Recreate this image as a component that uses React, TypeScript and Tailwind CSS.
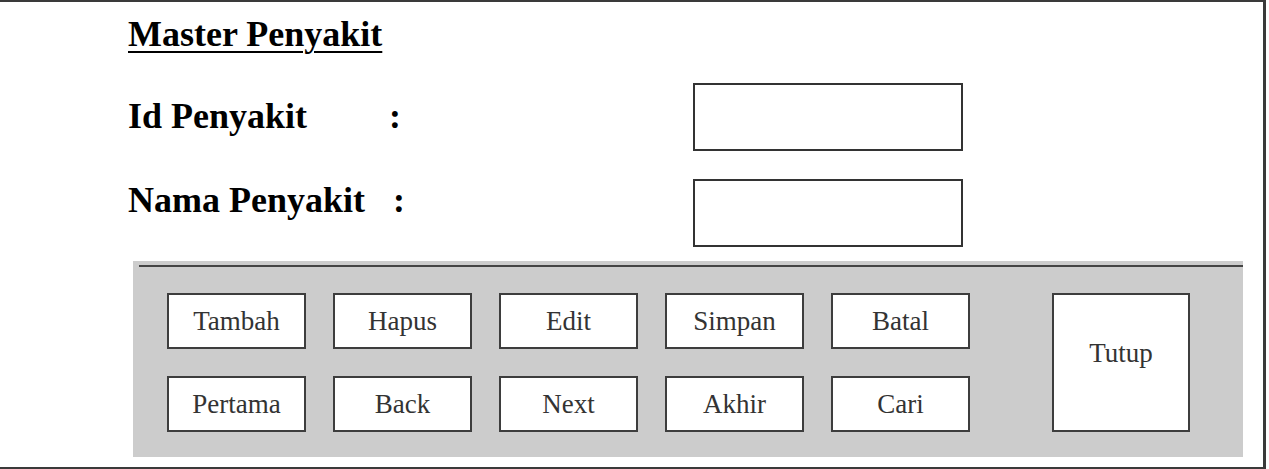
const fields = [
  { label: 'Id Penyakit', labelW: 'w-[261px]', rowTop: 'mt-[29px]', textTop: 'mt-[13px]' },
  { label: 'Nama Penyakit', labelW: 'w-[265px]', rowTop: 'mt-[28px]', textTop: 'mt-[1px]' },
]

const buttons = ['Tambah', 'Hapus', 'Edit', 'Simpan', 'Batal', 'Pertama', 'Back', 'Next', 'Akhir', 'Cari']

function FormButton({ label }: { label: string }) {
  return (
    <div className="h-[56px] border-2 border-[#3d3d3d] bg-white flex items-center justify-center text-[27px] leading-none text-[#333]">
      {label}
    </div>
  )
}

export default function App() {
  return (
    <div className="w-[1266px] h-[469px] border-t-2 border-r-[3px] border-b-2 border-[#3a3a3a] bg-white font-['Liberation_Serif','Times_New_Roman',serif]">
      {/* Title */}
      <div className="pl-[128px] pt-[12px]">
        <h1 className="text-[36px] leading-[40px] font-bold text-black underline decoration-2 underline-offset-[5px]">
          Master Penyakit
        </h1>
      </div>

      {/* Fields */}
      {fields.map((f) => (
        <div key={f.label} className={`flex items-start pl-[128px] ${f.rowTop}`}>
          <div className={`flex w-[565px] text-[36px] leading-[40px] font-bold text-black ${f.textTop}`}>
            <span className={f.labelW}>{f.label}</span>
            <span>:</span>
          </div>
          <div className="w-[270px] h-[68px] border-2 border-[#333] bg-white" />
        </div>
      ))}

      {/* Button panel */}
      <div className="ml-[133px] mt-[14px] w-[1110px] bg-[#cccccc] pt-[4px] pb-[25px]">
        <div className="ml-[6px] h-[2px] bg-[#444]" />
        <div className="flex items-start pl-[34px] mt-[26px]">
          <div className="grid grid-cols-[repeat(5,139px)] gap-[27px]">
            {buttons.map((b) => (
              <FormButton key={b} label={b} />
            ))}
          </div>
          <div className="ml-[82px] w-[138px] h-[139px] border-2 border-[#3d3d3d] bg-white flex items-center justify-center pb-[18px] text-[27px] leading-none text-[#333]">
            Tutup
          </div>
        </div>
      </div>
    </div>
  )
}
